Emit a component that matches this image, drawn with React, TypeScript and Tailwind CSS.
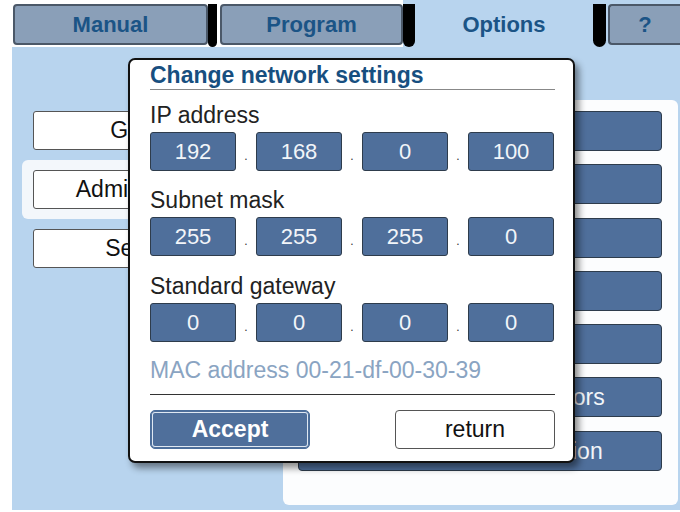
import React from "react";

const sideButtons = ["Global", "Administrator", "Service"];

const panelButtons = [
  "Date and time",
  "Language",
  "Display",
  "Network",
  "Users",
  "Configuration of sensors",
  "Network communication",
];

const addressRows = [
  { label: "IP address", values: ["192", "168", "0", "100"] },
  { label: "Subnet mask", values: ["255", "255", "255", "0"] },
  { label: "Standard gateway", values: ["0", "0", "0", "0"] },
];

const AddressField = ({ values }: { values: string[] }) => (
  <div className="flex items-end h-[39px]">
    {values.map((v, i) => (
      <React.Fragment key={i}>
        {i > 0 && (
          <span className="w-[20px] text-center text-[12px] leading-none mb-[9px] text-[#333]">
            .
          </span>
        )}
        <div className="w-[86px] h-[39px] flex items-center justify-center rounded-[3px] border border-[#2e3c4c] bg-[#4f6f9b] text-[22px] text-[#f2f5f9]">
          {v}
        </div>
      </React.Fragment>
    ))}
  </div>
);

export default function App() {
  return (
    <div className="relative w-[680px] h-[512px] bg-white pl-[12px] font-['Liberation_Sans',Arial,sans-serif] overflow-hidden">
      {/* tab bar */}
      <div className="flex h-[47px] text-[22px] font-bold text-[#1b5486]">
        <div className="ml-[1px] mt-[4px] w-[195px] h-[41px] flex items-center justify-center rounded-[4px] border-2 border-[#4b5868] bg-[#8a9fb8]">
          Manual
        </div>
        <div className="mt-[4px] w-[9px] h-[43px] bg-black rounded-b-full" />
        <div className="ml-[3px] mt-[4px] w-[183px] h-[41px] flex items-center justify-center rounded-[4px] border-2 border-[#4b5868] bg-[#8a9fb8]">
          Program
        </div>
        <div className="flex flex-1 bg-[#b8d4ee]">
          <div className="mt-[4px] w-[12px] h-[43px] bg-black rounded-tl-[10px] rounded-b-full" />
          <div className="w-[178px] h-[47px] flex items-center justify-center pt-[1px]">
            Options
          </div>
          <div className="mt-[4px] w-[13px] h-[43px] bg-black rounded-tr-[10px] rounded-b-full" />
          <div className="ml-[2px] mt-[4px] flex-1 h-[41px] flex items-center justify-center rounded-l-[4px] border-2 border-r-0 border-[#4b5868] bg-[#8a9fb8]">
            ?
          </div>
        </div>
      </div>

      {/* body */}
      <div className="h-[463px] bg-[#b8d4ee] flex items-start pt-[53px] pl-[10px]">
        <div className="mt-[1px] w-[243px] flex flex-col">
          {sideButtons.map((b, i) => (
            <div
              key={b}
              className={`px-[11px] py-[10px] rounded-[6px] ${i === 1 ? "bg-[#f3f7fb]" : ""}`}
            >
              <div className="h-[39px] flex items-center justify-center rounded-[3px] border border-[#555] bg-white text-[23px] text-[#111]">
                {b}
              </div>
            </div>
          ))}
        </div>
        <div className="ml-[18px] w-[395px] h-[405px] rounded-[6px] bg-[#fcfdfe] pt-[11px] pl-[15px] pr-[16px] flex flex-col gap-[13.3px]">
          {panelButtons.map((b) => (
            <div
              key={b}
              className="h-[40px] flex items-center justify-center rounded-[4px] border border-[#2e3c4c] bg-[#4f6f9b] text-[23px] text-[#f2f5f9]"
            >
              {b}
            </div>
          ))}
        </div>
      </div>

      {/* dialog */}
      <div className="absolute left-[128px] top-[58px] w-[447px] h-[405px] rounded-[7px] border-2 border-[#111] bg-white shadow-[4px_5px_7px_rgba(0,0,0,0.45)] pt-[4px] pl-[20px] pr-[18px] flex flex-col">
        <div className="h-[22px] leading-[22px] text-[23px] font-bold text-[#174f80]">
          Change network settings
        </div>
        <div className="mt-[3px] h-px bg-[#888]" />
        {addressRows.map((row, i) => (
          <div key={row.label} className={i === 0 ? "mt-[14px]" : i === 1 ? "mt-[18px]" : "mt-[19px]"}>
            <div className="h-[22px] leading-[22px] text-[23px] text-[#222]">{row.label}</div>
            <div className="mt-[6px]">
              <AddressField values={row.values} />
            </div>
          </div>
        ))}
        <div className="mt-[17px] h-[22px] leading-[22px] text-[23px] text-[#8aa4c2]">
          MAC address 00-21-df-00-30-39
        </div>
        <div className="mt-[13px] h-px bg-[#333]" />
        <div className="mt-[15px] flex justify-between">
          <button className="w-[160px] h-[39px] rounded-[5px] border border-[#4a6d9a] bg-[#4f6f9b] shadow-[inset_0_0_0_1px_#4f6f9b,inset_0_0_0_2px_#dfe8f2] text-[23px] font-bold text-white">
            Accept
          </button>
          <button className="w-[160px] h-[39px] rounded-[4px] border border-[#555] bg-white text-[23px] text-[#111]">
            return
          </button>
        </div>
      </div>
    </div>
  );
}
